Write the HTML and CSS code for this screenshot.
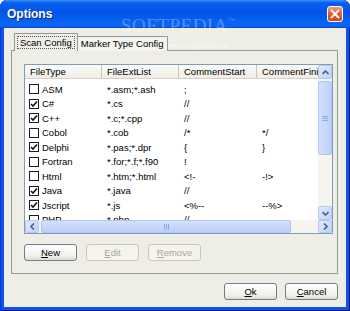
FILE: index.html
```html
<!DOCTYPE html>
<html lang="en">
<head>
    <meta charset="UTF-8">
    <title>Options</title>
    <link rel="stylesheet" href="styles.css">
</head>
<body>
    <div class="window">
        <div class="titlebar">
            <span class="title">Options</span>
            <span class="close" title="Close">
                <svg width="10" height="10" viewBox="0 0 10 10"><path d="M1.5 1.5 L8.5 8.5 M8.5 1.5 L1.5 8.5" stroke="#fff" stroke-width="1.8" stroke-linecap="square"/></svg>
            </span>
        </div>

        <div class="client">
            <div class="tabs">
                <div class="tab tab-active"><span class="focus">Scan Config</span></div>
                <div class="tab">Marker Type Config</div>
            </div>

            <div class="panel">
                <div class="list">
                    <div class="list-main">
                        <div class="list-view">
                            <div class="header">
                                <div class="col col-type">FileType</div>
                                <div class="col col-ext">FileExtList</div>
                                <div class="col col-start">CommentStart</div>
                                <div class="col col-finish">CommentFinish</div>
                            </div>
                            <div class="rows" id="rows"></div>
                        </div>
                        <div class="vscroll">
                            <div class="sb-btn"><svg width="7" height="5" viewBox="0 0 7 5"><path d="M0.5 4 L3.5 1 L6.5 4" fill="none" stroke="#4d6185" stroke-width="1.6"/></svg></div>
                            <div class="sb-track">
                                <div class="thumb thumb-v"><span class="grip-v"></span></div>
                            </div>
                            <div class="sb-btn"><svg width="7" height="5" viewBox="0 0 7 5"><path d="M0.5 1 L3.5 4 L6.5 1" fill="none" stroke="#4d6185" stroke-width="1.6"/></svg></div>
                        </div>
                    </div>
                    <div class="hscroll">
                        <div class="sb-btn"><svg width="5" height="7" viewBox="0 0 5 7"><path d="M4 0.5 L1 3.5 L4 6.5" fill="none" stroke="#4d6185" stroke-width="1.6"/></svg></div>
                        <div class="sb-track sb-track-h">
                            <div class="thumb thumb-h"><span class="grip-h"></span></div>
                        </div>
                        <div class="sb-btn"><svg width="5" height="7" viewBox="0 0 5 7"><path d="M1 0.5 L4 3.5 L1 6.5" fill="none" stroke="#4d6185" stroke-width="1.6"/></svg></div>
                    </div>
                </div>

                <div class="list-buttons">
                    <button class="btn"><u>N</u>ew</button>
                    <button class="btn" disabled><u>E</u>dit</button>
                    <button class="btn" disabled><u>R</u>emove</button>
                </div>
            </div>

            <div class="dialog-buttons">
                <button class="btn"><u>O</u>k</button>
                <button class="btn"><u>C</u>ancel</button>
            </div>
        </div>

        <!-- site watermark lying over the frame -->
        <div class="watermark">SOFTPEDIA<sup>&trade;</sup></div>
        <div class="watermark-url">www.softpedia.com</div>
    </div>

    <script>
        const fileTypes = [
            { name: "ASM", ext: "*.asm;*.ash", start: ";", finish: "", on: false },
            { name: "C#", ext: "*.cs", start: "//", finish: "", on: true },
            { name: "C++", ext: "*.c;*.cpp", start: "//", finish: "", on: true },
            { name: "Cobol", ext: "*.cob", start: "/*", finish: "*/", on: false },
            { name: "Delphi", ext: "*.pas;*.dpr", start: "{", finish: "}", on: true },
            { name: "Fortran", ext: "*.for;*.f;*.f90", start: "!", finish: "", on: false },
            { name: "Html", ext: "*.htm;*.html", start: "<!-", finish: "-!>", on: false },
            { name: "Java", ext: "*.java", start: "//", finish: "", on: true },
            { name: "Jscript", ext: "*.js", start: "<%--", finish: "--%>", on: true },
            { name: "PHP", ext: "*.php", start: "//", finish: "", on: false }
        ];

        const rowsDiv = document.getElementById('rows');

        function cell(cls, text) {
            const div = document.createElement('div');
            div.className = 'cell ' + cls;
            div.textContent = text;
            return div;
        }

        for (const ft of fileTypes) {
            const row = document.createElement('div');
            row.className = 'row';

            const first = document.createElement('div');
            first.className = 'cell col-type';
            const box = document.createElement('span');
            box.className = ft.on ? 'check checked' : 'check';
            box.innerHTML = '<svg width="8" height="8" viewBox="0 0 8 8"><path d="M1 4 L3 6 L7 1.5" fill="none" stroke="#111" stroke-width="1.6"/></svg>';
            first.appendChild(box);
            first.appendChild(document.createTextNode(ft.name));

            row.appendChild(first);
            row.appendChild(cell('col-ext', ft.ext));
            row.appendChild(cell('col-start', ft.start));
            row.appendChild(cell('col-finish', ft.finish));
            rowsDiv.appendChild(row);
        }
    </script>
</body>
</html>
```

FILE: styles.css
```css
*, *::before, *::after {
    box-sizing: border-box;
    margin: 0;
    padding: 0;
}
body {
    width: 350px;
    height: 311px;
    overflow: hidden;
    font-family: "Liberation Sans", Arial, sans-serif;
    font-size: 9.5px;
    color: #000;
    background: #fff;
}
.window {
    position: relative;
    width: 350px;
    height: 311px;
    display: flex;
    flex-direction: column;
    background: #0b55e6;
    border-radius: 7px 7px 0 0;
    overflow: hidden;
    box-shadow: inset 1px 0 #0831d9, inset -1px 0 #00138c, inset 0 -1px #00138c;
}

/* title bar */
.titlebar {
    height: 28px;
    flex: 0 0 28px;
    display: flex;
    align-items: center;
    padding: 0 7px 0 7px;
    border-radius: 7px 7px 0 0;
    background: linear-gradient(to bottom, #3d95ff 0%, #0a5ff0 10%, #0054e8 45%, #0866f4 85%, #0a5fe8 95%, #0642d0 100%);
}
.title {
    flex: 1;
    color: #fff;
    font-weight: bold;
    font-size: 12px;
    text-shadow: 1px 1px #0a2a8a;
}
.close {
    width: 16px;
    height: 16px;
    display: flex;
    align-items: center;
    justify-content: center;
    border: 1px solid #fff;
    border-radius: 3px;
    background: linear-gradient(to bottom, #f09a7c 0%, #e0603a 45%, #cc4422 100%);
}

/* dialog body */
.client {
    flex: 1;
    margin: 0 4px 4px;
    background: #eeede6;
    padding: 5px 8px 0 7px;
    display: flex;
    flex-direction: column;
}
.tabs {
    display: flex;
    align-items: flex-end;
    height: 18px;
    padding-left: 3px;
    margin-bottom: -1px;
    position: relative;
    z-index: 1;
}
.tab {
    height: 15px;
    line-height: 14px;
    padding: 0 3px;
    border: 1px solid #919b9c;
    border-bottom: none;
    background: #f4f3ee;
    white-space: nowrap;
}
.tab-active {
    height: 18px;
    padding: 2px 2px 0;
    background: #eeede6;
    margin-right: -1px;
    position: relative;
    z-index: 2;
}
.focus {
    display: block;
    height: 13px;
    line-height: 11px;
    padding: 0 2px;
    border: 1px dotted #555;
}
.panel {
    height: 224px;
    border: 1px solid #919b9c;
    padding: 13px 4px 0 12px;
    display: flex;
    flex-direction: column;
}

/* list view */
.list {
    height: 170px;
    border: 1px solid #7f9db9;
    background: #fff;
    display: flex;
    flex-direction: column;
}
.list-main {
    flex: 1;
    min-height: 0;
    display: flex;
}
.list-view {
    flex: 1;
    overflow: hidden;
}
.header {
    display: flex;
    height: 14px;
    background: linear-gradient(to bottom, #fafaf8, #eeede6);
    border-bottom: 1px solid #d5d2c3;
}
.col {
    flex: 0 0 auto;
    padding-left: 5px;
    line-height: 13px;
    white-space: nowrap;
    overflow: hidden;
    border-right: 1px solid #c9c6b5;
}
.col-type { width: 77px; }
.col-ext { width: 77px; }
.col-start { width: 78px; }
.col-finish { width: 80px; border-right: none; }

.rows { padding-top: 3px; }
.row {
    display: flex;
    height: 14.5px;
    align-items: center;
}
.cell {
    flex: 0 0 auto;
    padding-left: 5px;
    white-space: nowrap;
    overflow: hidden;
    display: flex;
    align-items: center;
}
.row .col-type { padding-left: 4px; }
.check {
    width: 10px;
    height: 10px;
    margin-right: 3px;
    border: 1px solid #1c1c1c;
    background: #fff;
    display: flex;
    align-items: center;
    justify-content: center;
}
.check svg { visibility: hidden; }
.check.checked svg { visibility: visible; }

/* scroll bars */
.vscroll {
    width: 14px;
    display: flex;
    flex-direction: column;
    background: #f5f4ef;
}
.hscroll {
    height: 13px;
    display: flex;
    background: #f5f4ef;
}
.sb-btn {
    flex: 0 0 14px;
    width: 14px;
    height: 14px;
    display: flex;
    align-items: center;
    justify-content: center;
    border: 1px solid #b5c8f2;
    border-radius: 2px;
    background: linear-gradient(to bottom right, #e1eafe, #c0d2f8);
}
.hscroll .sb-btn {
    height: 13px;
    flex-basis: 14px;
}
.sb-track {
    flex: 1;
    display: flex;
    flex-direction: column;
    padding: 2px 0;
}
.sb-track-h {
    flex-direction: row;
    padding: 0 2px;
}
.thumb {
    display: flex;
    align-items: center;
    justify-content: center;
    border: 1px solid #b1c6f2;
    border-radius: 2px;
    background: linear-gradient(to right, #d3e0fd, #bcd0f8);
}
.thumb-v { height: 74px; }
.thumb-h {
    width: 250px;
    background: linear-gradient(to bottom, #d3e0fd, #bcd0f8);
}
.grip-v {
    width: 6px;
    height: 5px;
    border-top: 1px solid #8fa8e0;
    border-bottom: 1px solid #8fa8e0;
    background: linear-gradient(#8fa8e0, #8fa8e0) center / 6px 1px no-repeat;
}
.grip-h {
    width: 5px;
    height: 6px;
    border-left: 1px solid #8fa8e0;
    border-right: 1px solid #8fa8e0;
    background: linear-gradient(#8fa8e0, #8fa8e0) center / 1px 6px no-repeat;
}

/* buttons */
.list-buttons {
    display: flex;
    gap: 9px;
    margin-top: 10px;
}
.dialog-buttons {
    display: flex;
    justify-content: flex-end;
    gap: 8px;
    margin-top: 9px;
}
.btn {
    width: 53px;
    height: 17px;
    font-family: inherit;
    font-size: 9.5px;
    color: #000;
    border: 1px solid #6f7e92;
    border-radius: 3px;
    background: linear-gradient(to bottom, #ffffff, #f2f1ec 70%, #dedcd2);
}
.btn:disabled {
    color: #aca899;
    border-color: #c9c7ba;
    background: #f4f3ee;
}
.btn u { text-decoration: underline; }

/* watermark */
.watermark {
    position: absolute;
    left: 121px;
    top: 15px;
    font-family: "Liberation Serif", serif;
    font-size: 19px;
    letter-spacing: 0.5px;
    color: rgba(255, 255, 255, 0.3);
    pointer-events: none;
}
.watermark sup { font-size: 7px; vertical-align: 9px; }
.watermark-url {
    position: absolute;
    left: 166px;
    top: 41px;
    font-family: "Liberation Serif", serif;
    font-size: 8px;
    color: rgba(255, 255, 255, 0.75);
    pointer-events: none;
}
```
